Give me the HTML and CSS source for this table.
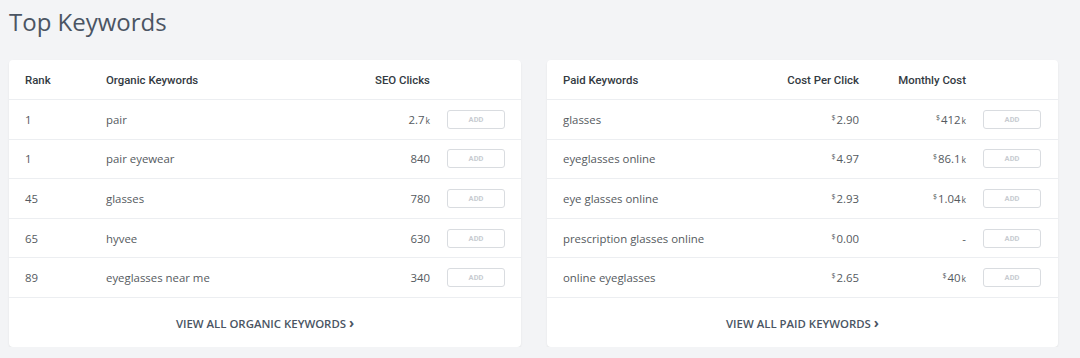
FILE: index.html
```html
<!DOCTYPE html>
<html>
<head>
  <title>Top Keywords</title>
  <meta name="viewport" content="width=device-width, initial-scale=1.0">
  <link rel="stylesheet" href="styles.css">
</head>
<body>
  <h1>Top Keywords</h1>

  <div class="cards">
    <div class="card organic">
      <div class="row head">
        <span>Rank</span>
        <span>Organic Keywords</span>
        <span class="num">SEO Clicks</span>
        <span></span>
      </div>
      <div class="row">
        <span>1</span><span>pair</span>
        <span class="num">2.7<small>k</small></span>
        <span class="act"><button>ADD</button></span>
      </div>
      <div class="row">
        <span>1</span><span>pair eyewear</span>
        <span class="num">840</span>
        <span class="act"><button>ADD</button></span>
      </div>
      <div class="row">
        <span>45</span><span>glasses</span>
        <span class="num">780</span>
        <span class="act"><button>ADD</button></span>
      </div>
      <div class="row">
        <span>65</span><span>hyvee</span>
        <span class="num">630</span>
        <span class="act"><button>ADD</button></span>
      </div>
      <div class="row">
        <span>89</span><span>eyeglasses near me</span>
        <span class="num">340</span>
        <span class="act"><button>ADD</button></span>
      </div>
      <a class="more" href="#">View all organic keywords <span class="chev">&#8250;</span></a>
    </div>

    <div class="card paid">
      <div class="row head">
        <span>Paid Keywords</span>
        <span class="num">Cost Per Click</span>
        <span class="num">Monthly Cost</span>
        <span></span>
      </div>
      <div class="row">
        <span>glasses</span>
        <span class="num"><sup>$</sup>2.90</span>
        <span class="num"><sup>$</sup>412<small>k</small></span>
        <span class="act"><button>ADD</button></span>
      </div>
      <div class="row">
        <span>eyeglasses online</span>
        <span class="num"><sup>$</sup>4.97</span>
        <span class="num"><sup>$</sup>86.1<small>k</small></span>
        <span class="act"><button>ADD</button></span>
      </div>
      <div class="row">
        <span>eye glasses online</span>
        <span class="num"><sup>$</sup>2.93</span>
        <span class="num"><sup>$</sup>1.04<small>k</small></span>
        <span class="act"><button>ADD</button></span>
      </div>
      <div class="row">
        <span>prescription glasses online</span>
        <span class="num"><sup>$</sup>0.00</span>
        <span class="num">-</span>
        <span class="act"><button>ADD</button></span>
      </div>
      <div class="row">
        <span>online eyeglasses</span>
        <span class="num"><sup>$</sup>2.65</span>
        <span class="num"><sup>$</sup>40<small>k</small></span>
        <span class="act"><button>ADD</button></span>
      </div>
      <a class="more" href="#">View all paid keywords <span class="chev">&#8250;</span></a>
    </div>
  </div>
</body>
</html>
```

FILE: styles.css
```css
body {
    font-family: "Open Sans", Arial, sans-serif;
    margin: 0;
    padding: 0 9px;
    background-color: #f3f4f6;
    color: #555a60;
}

h1 {
    font-size: 24px;
    font-weight: 400;
    line-height: 32px;
    margin: 6px 0 22px;
    color: #4b5563;
}

.cards {
    display: grid;
    grid-template-columns: 512px 511px;
    column-gap: 26px;
}

.card {
    background: #fff;
    border-radius: 4px;
    box-shadow: 0 1px 2px rgba(0, 0, 0, 0.08);
    display: flex;
    flex-direction: column;
}

.row {
    display: grid;
    align-items: center;
    height: 38.6px;
    padding: 0 16px;
    font-size: 11.4px;
    border-top: 1px solid #eceef1;
}

.organic .row {
    grid-template-columns: 81px 1fr 80px 75px;
}

.paid .row {
    grid-template-columns: 1fr 100px 107px 75px;
    padding-right: 17px;
}

.row.head {
    height: 39px;
    border-top: none;
    font-family: Roboto, Arial, sans-serif;
    font-weight: 500;
    font-size: 11.4px;
    color: #333a42;
}

.num {
    text-align: right;
}

.num small {
    font-size: 8.5px;
    margin-left: 1px;
}

.num sup {
    font-size: 7px;
    margin-right: 1px;
    vertical-align: 4px;
}

.act {
    display: flex;
    justify-content: flex-end;
}

button {
    width: 58px;
    height: 19px;
    padding: 0;
    border: 1px solid #d9dce0;
    border-radius: 3px;
    background: #fff;
    font-family: Roboto, Arial, sans-serif;
    font-size: 7.5px;
    font-weight: 700;
    color: #c8ccd1;
}

.more {
    display: block;
    border-top: 1px solid #eceef1;
    height: 49px;
    line-height: 49px;
    text-align: center;
    text-decoration: none;
    text-transform: uppercase;
    font-size: 11.4px;
    font-weight: 600;
    color: #4a5563;
}

.chev {
    font-size: 14px;
    font-weight: 700;
}
```
